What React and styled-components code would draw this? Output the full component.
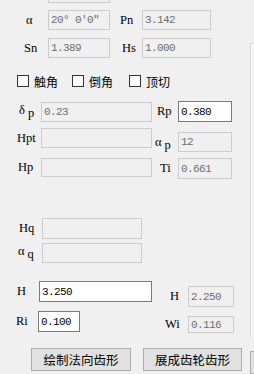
import React from "react";
import styled, { createGlobalStyle } from "styled-components";

const GlobalStyle = createGlobalStyle`
    html, body {
        margin: 0;
        padding: 0;
        background: #f0f0f0;
        overflow: hidden;
    }
    body {
        font-family: "Liberation Mono", monospace;
    }
`;

const Dialog = styled.div`
    display: flex;
    width: 254px;
    height: 374px;
    overflow: hidden;
    background: #f0f0f0;
`;

const Form = styled.div`
    display: flex;
    flex-direction: column;
    width: 250px;
    flex: none;
`;

const Side = styled.div`
    display: flex;
    flex-direction: column;
    flex: 1;
`;

const GroupEdge = styled.div`
    margin-top: 43px;
    height: 293px;
    border-left: 1px solid #d5d5d5;
    border-top: 1px solid #d5d5d5;
    box-shadow: inset 1px 1px 0 #ffffff;
`;

const Row = styled.div`
    display: flex;
    align-items: ${({ $align }) => $align || "center"};
    flex: none;
    height: ${({ $h }) => $h}px;
    margin-top: ${({ $mt }) => $mt}px;
    padding-left: ${({ $pl }) => $pl || 0}px;
`;

const Label = styled.span`
    flex: none;
    width: ${({ $w }) => $w}px;
    margin-left: ${({ $ml }) => $ml || 0}px;
    align-self: ${({ $self }) => $self || "auto"};
    height: ${({ $lh }) => ($lh ? `${$lh}px` : "auto")};
    line-height: ${({ $lh }) => ($lh ? `${$lh}px` : "normal")};
    font-family: "Liberation Serif", "DejaVu Serif", serif;
    font-size: 12.5px;
    color: #000;
    white-space: nowrap;
`;

const Sub = styled.span`
    vertical-align: -3px;
    margin-left: 3px;
`;

const Field = styled.div`
    box-sizing: border-box;
    flex: none;
    display: flex;
    align-items: center;
    width: ${({ $w }) => $w}px;
    height: ${({ $h }) => $h || 20}px;
    margin-left: ${({ $ml }) => $ml || 0}px;
    align-self: ${({ $self }) => $self || "auto"};
    padding-left: 2px;
    border: 1px solid ${({ $on }) => ($on ? "#7a7a7a" : "#cccccc")};
    background: ${({ $on }) => ($on ? "#ffffff" : "#f0f0f0")};
    color: ${({ $on }) => ($on ? "#000000" : "#6d6d6d")};
    font-family: "Liberation Mono", "DejaVu Sans Mono", monospace;
    font-size: 11px;
    letter-spacing: -0.6px;
    white-space: nowrap;
    overflow: hidden;
`;

const CheckItem = styled.label`
    display: flex;
    align-items: center;
    flex: none;
    width: ${({ $w }) => ($w ? `${$w}px` : "auto")};
    font-family: "Noto Sans CJK SC", sans-serif;
    font-size: 12px;
    color: #000;
`;

const CheckBox = styled.span`
    box-sizing: border-box;
    width: 12px;
    height: 12px;
    border: 1px solid #333333;
    background: #ffffff;
    margin-right: 5px;
    flex: none;
`;

const Button = styled.button`
    box-sizing: border-box;
    flex: none;
    width: ${({ $w }) => $w}px;
    height: 23px;
    margin: 0 0 0 ${({ $ml }) => $ml || 0}px;
    padding: 0;
    border: 1px solid #adadad;
    background: #e1e1e1;
    font-family: "Noto Sans CJK SC", sans-serif;
    font-size: 12.5px;
    color: #000;
    line-height: 21px;
`;

const EdgeButton = styled(Button)`
    margin-top: 14px;
    width: auto;
    border-right: none;
`;

const App = () => {
    return (
        <>
            <GlobalStyle />
            <Dialog>
                <Form>
                    <Row $mt={-18} $h={21} $pl={48}>
                        <Field $w={62} $h={21} />
                    </Row>
                    <Row $mt={7} $h={20} $pl={26}>
                        <Label $w={22}>α</Label>
                        <Field $w={62}>20° 0′0″</Field>
                        <Label $w={22} $ml={10}>Pn</Label>
                        <Field $w={69}>3.142</Field>
                    </Row>
                    <Row $mt={8} $h={20} $pl={24}>
                        <Label $w={24}>Sn</Label>
                        <Field $w={62}>1.389</Field>
                        <Label $w={20} $ml={12}>Hs</Label>
                        <Field $w={69}>1.000</Field>
                    </Row>
                    <Row $mt={17} $h={12} $pl={17}>
                        <CheckItem $w={55}><CheckBox />触角</CheckItem>
                        <CheckItem $w={57}><CheckBox />倒角</CheckItem>
                        <CheckItem><CheckBox />顶切</CheckItem>
                    </Row>
                    <Row $mt={14} $h={21} $pl={19}>
                        <Label $w={22}>δ<Sub>p</Sub></Label>
                        <Field $w={111}>0.23</Field>
                        <Label $w={21} $ml={5}>Rp</Label>
                        <Field $w={54} $h={21} $on>0.380</Field>
                    </Row>
                    <Row $mt={6} $h={24} $pl={17}>
                        <Label $w={24} $self="flex-start" $lh={20}>Hpt</Label>
                        <Field $w={111} $self="flex-start" />
                        <Label $w={23} $ml={3} $self="flex-end" $lh={20}>α<Sub>p</Sub></Label>
                        <Field $w={54} $self="flex-end">12</Field>
                    </Row>
                    <Row $mt={6} $h={21} $pl={18}>
                        <Label $w={23} $self="flex-start" $lh={19}>Hp</Label>
                        <Field $w={111} $h={19} $self="flex-start" />
                        <Label $w={18} $ml={8}>Ti</Label>
                        <Field $w={54} $h={21}>0.661</Field>
                    </Row>
                    <Row $mt={39} $h={21} $pl={19}>
                        <Label $w={23}>Hq</Label>
                        <Field $w={100} $h={21} />
                    </Row>
                    <Row $mt={4} $h={20} $pl={18}>
                        <Label $w={24}>α<Sub>q</Sub></Label>
                        <Field $w={100} />
                    </Row>
                    <Row $mt={18} $h={26} $pl={17}>
                        <Label $w={22} $self="flex-start" $lh={21}>H</Label>
                        <Field $w={113} $h={21} $self="flex-start" $on>3.250</Field>
                        <Label $w={18} $ml={18} $self="flex-end" $lh={21}>H</Label>
                        <Field $w={46} $h={21} $self="flex-end">2.250</Field>
                    </Row>
                    <Row $mt={4} $h={22} $pl={16}>
                        <Label $w={22} $self="flex-start" $lh={21}>Ri</Label>
                        <Field $w={42} $h={21} $self="flex-start" $on>0.100</Field>
                        <Label $w={23} $ml={85} $self="flex-end" $lh={17}>Wi</Label>
                        <Field $w={46} $h={17} $self="flex-end">0.116</Field>
                    </Row>
                    <Row $mt={15} $h={23} $pl={31}>
                        <Button $w={100}>绘制法向齿形</Button>
                        <Button $w={99} $ml={12}>展成齿轮齿形</Button>
                    </Row>
                </Form>
                <Side>
                    <GroupEdge />
                    <EdgeButton />
                </Side>
            </Dialog>
        </>
    );
};

export default App;
